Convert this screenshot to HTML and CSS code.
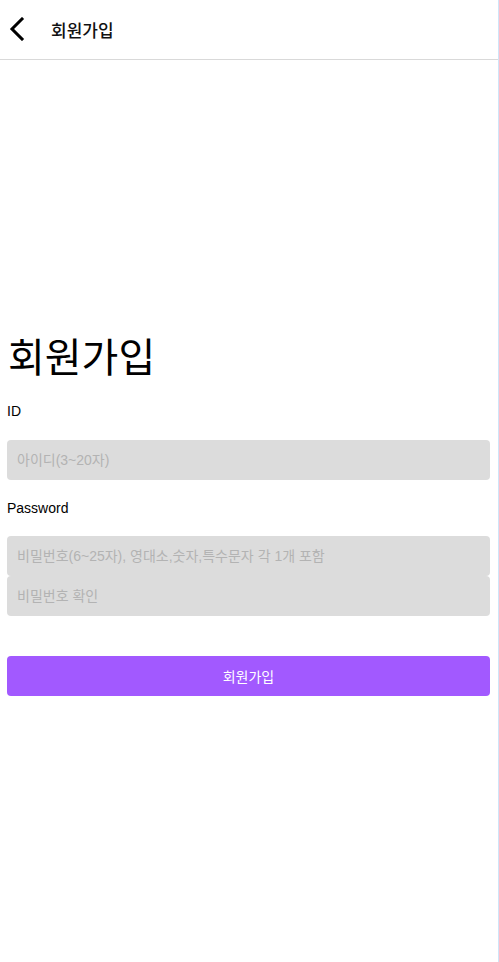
FILE: index.html
```html
<!DOCTYPE html>
<html lang="ko">
<head>
<meta charset="utf-8">
<title>회원가입</title>
<link rel="stylesheet" href="styles.css">
</head>
<body>
<div class="app">
  <header class="topbar">
    <button class="back" aria-label="뒤로">
      <svg width="16" height="24" viewBox="0 0 16 24"><path d="M13 2 L3 12 L13 22" fill="none" stroke="#000" stroke-width="3" stroke-linecap="square" stroke-linejoin="miter"/></svg>
    </button>
    <span class="topbar-title">회원가입</span>
  </header>
  <main class="form-wrap">
    <h1 class="title">회원가입</h1>
    <label class="label" for="uid">ID</label>
    <input class="field" id="uid" type="text" placeholder="아이디(3~20자)">
    <label class="label label-pw" for="pw">Password</label>
    <div class="pw-group">
      <input class="field" id="pw" type="password" placeholder="비밀번호(6~25자), 영대소,숫자,특수문자 각 1개 포함">
      <input class="field" id="pw2" type="password" placeholder="비밀번호 확인">
    </div>
    <button class="submit" type="button">회원가입</button>
  </main>
</div>
</body>
</html>
```
FILE: styles.css
```css
* { box-sizing: border-box; }
html, body { margin: 0; padding: 0; background: #fff; }
body {
  font-family: "Liberation Sans", "Noto Sans CJK KR", Arial, sans-serif;
  color: #000;
}
.app {
  width: 499px;
  min-height: 962px;
  border-right: 1px solid #cfe4f8;
}
.topbar {
  height: 60px;
  border-bottom: 1px solid #d9d9d9;
  display: flex;
  align-items: center;
  padding-left: 8px;
}
.back {
  border: 0;
  background: none;
  padding: 0;
  width: 18px;
  height: 24px;
  display: flex;
  align-items: center;
  justify-content: center;
  margin-right: 25px;
  margin-top: -1px;
  cursor: pointer;
}
.topbar-title {
  font-family: "Noto Sans CJK KR", sans-serif;
  font-size: 17px;
  font-weight: 500;
  color: #111;
}
.form-wrap {
  display: flex;
  flex-direction: column;
  padding: 0 8px 0 7px;
}
.title {
  margin: 270px 0 0 1px;
  font-family: "Noto Sans CJK KR", sans-serif;
  font-weight: 400;
  font-size: 40px;
  line-height: 50px;
}
.label {
  font-size: 14px;
  line-height: 16px;
  margin-top: 23px;
}
.label-pw { margin-top: 20px; }
.field {
  display: block;
  width: 100%;
  height: 40px;
  border: 0;
  border-radius: 4px;
  background: #dcdcdc;
  padding: 0 10px;
  font-family: "Liberation Sans", "Noto Sans CJK KR", sans-serif;
  font-size: 14px;
  color: #333;
  outline: none;
}
.field::placeholder { color: #b3b3b3; }
#uid { margin-top: 21px; }
.pw-group { margin-top: 20px; display: flex; flex-direction: column; }
.submit {
  margin-top: 40px;
  height: 40px;
  border: 0;
  border-radius: 4px;
  background: #a259ff;
  color: #fff;
  font-family: "Liberation Sans", "Noto Sans CJK KR", sans-serif;
  font-size: 14px;
  cursor: pointer;
}
```
